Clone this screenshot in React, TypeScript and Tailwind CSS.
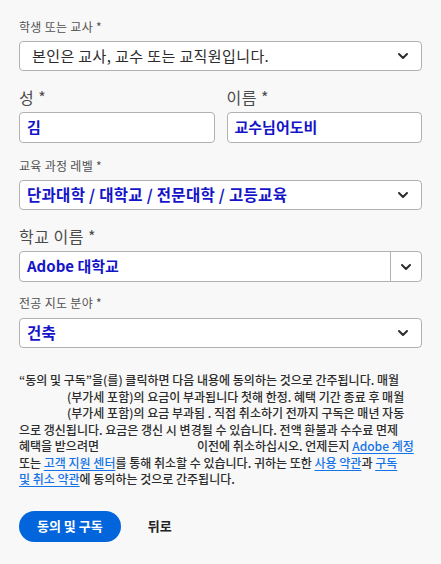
import { ChevronDown } from "lucide-react";

const font = "font-['Noto_Sans_CJK_KR','Noto_Sans',sans-serif]";

const Chevron = () => (
    <ChevronDown size={16} strokeWidth={3} className="text-[#2c2c2c]" />
);

const Select = ({ value, filled }: { value: string; filled?: boolean }) => (
    <div className={`flex h-[30px] items-center justify-between rounded-[4px] border border-[#b1b1b1] bg-white pr-[10px] ${filled ? "pl-[7px]" : "pl-[12px]"}`}>
        <span className={filled ? "text-[15.5px] font-bold tracking-[0.3px] text-[#1414c8]" : "text-[15px] tracking-[0.4px] text-[#2c2c2c]"}>{value}</span>
        <Chevron />
    </div>
);

const TextInput = ({ value }: { value: string }) => (
    <div className="flex h-[31px] items-center rounded-[4px] border border-[#b1b1b1] bg-white px-[7px]">
        <span className="text-[15px] font-bold text-[#1414c8]">{value}</span>
    </div>
);

const Link = ({ children }: { children: React.ReactNode }) => (
    <a href="#" className="text-[#1473e6] underline underline-offset-2">
        {children}
    </a>
);

export default function App() {
    return (
        <div className={`min-h-[564px] w-[441px] bg-[#f8f8f8] px-[19px] pt-[19px] ${font}`}>
            <label className="block text-[12px] leading-[16px] tracking-[0.3px] text-[#505050]">학생 또는 교사 *</label>
            <div className="mt-[6px]">
                <Select value="본인은 교사, 교수 또는 교직원입니다." />
            </div>

            <div className="mt-[16px] flex gap-[12px]">
                <div className="flex-1">
                    <label className="block text-[16px] leading-[20px] tracking-[0.5px] text-[#4b4b4b]">성 *</label>
                    <div className="mt-[5px]">
                        <TextInput value="김" />
                    </div>
                </div>
                <div className="flex-1">
                    <label className="block text-[16px] leading-[20px] tracking-[0.5px] text-[#4b4b4b]">이름 *</label>
                    <div className="mt-[5px]">
                        <TextInput value="교수님어도비" />
                    </div>
                </div>
            </div>

            <label className="mt-[15px] block text-[12px] leading-[16px] tracking-[0.3px] text-[#505050]">교육 과정 레벨 *</label>
            <div className="mt-[6px]">
                <Select value="단과대학 / 대학교 / 전문대학 / 고등교육" filled />
            </div>

            <label className="mt-[16px] block text-[16px] leading-[20px] tracking-[0.5px] text-[#4b4b4b]">학교 이름 *</label>
            <div className="mt-[5px] flex h-[31px] rounded-[4px] border border-[#b1b1b1] bg-white">
                <div className="flex flex-1 items-center px-[7px]">
                    <span className="text-[15px] font-bold text-[#1414c8]">Adobe 대학교</span>
                </div>
                <div className="flex w-[31px] items-center justify-center border-l border-[#b1b1b1]">
                    <Chevron />
                </div>
            </div>

            <label className="mt-[13px] block text-[12px] leading-[16px] tracking-[0.3px] text-[#505050]">전공 지도 분야 *</label>
            <div className="mt-[7px]">
                <Select value="건축" filled />
            </div>

            <div className="mt-[24px] whitespace-nowrap text-[12px] font-medium leading-[16.5px] text-[#2c2c2c]">
                <div>“동의 및 구독”을(를) 클릭하면 다음 내용에 동의하는 것으로 간주됩니다. 매월</div>
                <div className="pl-[48px]">(부가세 포함)의 요금이 부과됩니다 첫해 한정. 혜택 기간 종료 후 매월</div>
                <div className="pl-[48px]">(부가세 포함)의 요금 부과됨 . 직접 취소하기 전까지 구독은 매년 자동</div>
                <div>으로 갱신됩니다. 요금은 갱신 시 변경될 수 있습니다. 전액 환불과 수수료 면제</div>
                <div>
                    혜택을 받으려면<span className="inline-block w-[98px]" />이전에 취소하십시오. 언제든지 <Link>Adobe 계정</Link>
                </div>
                <div>
                    또는 <Link>고객 지원 센터</Link>를 통해 취소할 수 있습니다. 귀하는 또한 <Link>사용 약관</Link>과 <Link>구독</Link>
                </div>
                <div>
                    <Link>및 취소 약관</Link>에 동의하는 것으로 간주됩니다.
                </div>
            </div>

            <div className="mt-[23px] flex items-center gap-[27px]">
                <button className="h-[31px] rounded-full bg-[#0265dc] px-[18px] text-[13px] font-bold text-white">동의 및 구독</button>
                <button className="text-[13px] font-bold text-[#222]">뒤로</button>
            </div>
        </div>
    );
}
